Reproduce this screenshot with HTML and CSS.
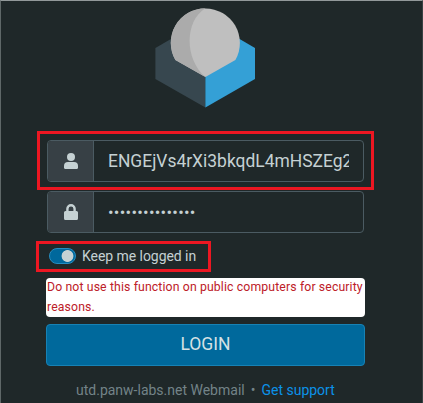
FILE: index.html
```
<!DOCTYPE html>
<html lang="en">
<head>
<meta charset="utf-8">
<title>Webmail login</title>
<link rel="stylesheet" href="styles.css">
</head>
<body>
<main class="login">
  <svg class="logo" viewBox="-.4 0 100 100" aria-hidden="true">
    <path fill="#37474f" d="M0 40 50 11v88.500L0 71Z"/>
    <path fill="#34a0d6" d="M50 11 99.600 40v31L50 99.500Z"/>
    <path fill="#bfbfbf" d="M50 69 20 52A34.500 34.500 0 1 1 80 52Z"/>
    <path fill="#ababab" d="M50 69 20 52A34.500 34.500 0 0 1 50 .2C29 13 29 51 50 69Z"/>
  </svg>
  <form class="form">
    <div class="marked">
      <div class="field">
        <span class="prefix"><svg class="icon" viewBox="0 0 14 16"><circle cx="7" cy="4" r="4"/><path d="M4 9h6q4 0 4 4v1.500q0 1.500-1.500 1.500h-11Q0 16 0 14.500V13q0-4 4-4Z"/></svg></span>
        <span class="value"><span class="user">ENGEjVs4rXi3bkqdL4mHSZEg2</span></span>
      </div>
      <i class="frame frame-user"></i>
    </div>
    <div class="field">
      <span class="prefix"><svg class="icon" viewBox="0 0 14 16"><path fill-rule="evenodd" d="M2.200 7V4.800a4.800 4.800 0 0 1 9.600 0V7h.7Q14 7 14 8.500v6q0 1.500-1.500 1.500h-11Q0 16 0 14.500v-6Q0 7 1.500 7ZM4.600 7h4.800V4.800a2.400 2.400 0 0 0-4.800 0Z"/></svg></span>
      <span class="value"><span class="dots">•••••••••••••••</span></span>
    </div>
    <div class="marked keep">
      <span class="switch"></span><span class="keep-label">Keep me logged in</span>
      <i class="frame frame-keep"></i>
    </div>
    <p class="warning">Do not use this function on public computers for security<br>reasons.</p>
    <button class="submit" type="button">LOGIN</button>
  </form>
  <footer class="footer"><span>utd.panw-labs.net Webmail</span><span class="sep">•</span><a class="support">Get support</a></footer>
</main>
</body>
</html>
```
FILE: styles.css
```
* { box-sizing: border-box; }
body {
  margin: 0;
  height: 403px;
  overflow: hidden;
  background: #1f2829;
  border-top: 1px solid #92999a;
  border-left: 1px solid #5f6868;
  border-right: 1px solid #384243;
  font-family: Roboto, "Liberation Sans", sans-serif;
  color: #c5d1d3;
}
.login {
  padding: 7px 58px 0 46px;
  display: flex;
  flex-direction: column;
}
.logo {
  width: 100px;
  height: 100px;
  margin-left: 108px;
}
.form {
  display: flex;
  flex-direction: column;
  margin-top: 32px;
}
.marked { position: relative; }
.field {
  display: flex;
  height: 42px;
  border: 1px solid #4b5b62;
  border-radius: 4px;
  overflow: hidden;
}
.marked + .field { margin-top: 9px; }
.prefix {
  width: 46px;
  display: flex;
  align-items: center;
  justify-content: center;
  background: #374045;
  border-right: 1px solid #4b5b62;
}
.icon {
  width: 14px;
  height: 16px;
  fill: #c5d1d3;
}
.value {
  flex: 1;
  margin: 0 14px;
  overflow: hidden;
  display: flex;
  align-items: center;
  white-space: nowrap;
}
.user { font-size: 17.450px; }
.dots { font-size: 16.500px; letter-spacing: .28px; }
.frame {
  position: absolute;
  border: 3px solid #ec1722;
}
.frame-user { left: -10px; top: -9px; width: 337px; height: 59px; }
.keep {
  display: flex;
  align-items: center;
  height: 16px;
  margin-top: 15px;
  padding-left: 2px;
}
.frame-keep { left: -11px; top: -7px; width: 175px; height: 31px; }
.switch {
  width: 27px;
  height: 16px;
  border: 1px solid #248dc1;
  border-radius: 8px;
  background: radial-gradient(circle at 17.500px 7px, #c5d1d3 5.500px, #00689c 6.300px);
}
.keep-label { margin-left: 6px; font-size: 14px; letter-spacing: -.05px; }
.warning {
  margin: 14px 0 0 -1px;
  width: 319px;
  height: 39px;
  padding: 0 1px;
  border-radius: 4px;
  background: #fff;
  color: #bd2028;
  font-size: 12.250px;
  letter-spacing: .13px;
  line-height: 19.500px;
  white-space: nowrap;
}
.submit {
  margin: 7px 0 0 -1px;
  width: 319px;
  height: 42px;
  padding: 0 0 2px;
  border: 1px solid #1782b5;
  border-radius: 4px;
  background: #00699c;
  color: #d5e1e5;
  font: 17.500px Roboto, sans-serif;
}
.footer {
  display: flex;
  align-items: center;
  margin: 15px 0 0 29px;
  height: 18px;
  font-size: 14px;
  color: #738388;
  white-space: nowrap;
}
.sep { margin: 0 6px; }
.support { color: #0b92e8; }
```
